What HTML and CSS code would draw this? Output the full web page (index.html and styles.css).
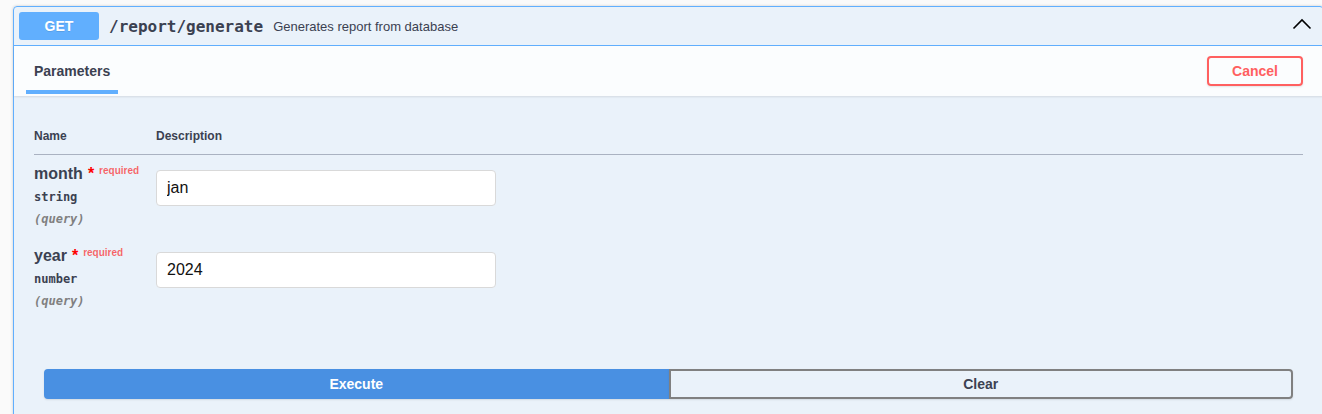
FILE: index.html
```html
<!DOCTYPE html>
<html lang="en">
<head>
<meta charset="utf-8">
<title>GET /report/generate</title>
<link rel="stylesheet" href="styles.css">
</head>
<body>
<div class="page">
  <div class="opblock">
    <div class="summary">
      <span class="method">GET</span>
      <span class="path">/report/generate</span>
      <span class="summary-desc">Generates report from database</span>
      <svg class="arrow" width="20" height="12" viewBox="0 0 20 12" aria-hidden="true">
        <polyline points="1.5,10.5 10,2 18.5,10.5" fill="none" stroke="#000" stroke-width="1.6"/>
      </svg>
    </div>
    <div class="opblock-body">
      <div class="section-header">
        <div class="tab"><h4 class="tab-title"><span class="tab-label">Parameters</span></h4></div>
        <button class="btn cancel">Cancel</button>
      </div>
      <div class="table-container">
        <div class="params">
          <div class="row head">
            <div class="col-name">Name</div>
            <div class="col-desc">Description</div>
          </div>
          <div class="row param">
            <div class="col-name">
              <div class="param-name">month<span class="star">*</span><span class="req">required</span></div>
              <div class="param-type">string</div>
              <div class="param-in">(query)</div>
            </div>
            <div class="col-desc">
              <input class="param-input" type="text" value="jan">
            </div>
          </div>
          <div class="row param">
            <div class="col-name">
              <div class="param-name">year<span class="star">*</span><span class="req">required</span></div>
              <div class="param-type">number</div>
              <div class="param-in">(query)</div>
            </div>
            <div class="col-desc">
              <input class="param-input" type="text" value="2024">
            </div>
          </div>
        </div>
      </div>
      <div class="btn-group">
        <button class="btn execute">Execute</button>
        <button class="btn clear">Clear</button>
      </div>
    </div>
  </div>
</div>
</body>
</html>
```
FILE: styles.css
```css
html, body {
  margin: 0;
  padding: 0;
  overflow: hidden;
  background: #fafafa;
}

body {
  font-family: "Liberation Sans", Arial, sans-serif;
  color: #3b4151;
}

.page {
  padding: 6px 0 0 13px;
}

.opblock {
  width: 1311px;
  box-sizing: border-box;
  border: 1px solid #61affe;
  border-radius: 4px;
  background: rgba(97, 175, 254, 0.1);
  box-shadow: 0 0 3px rgba(0, 0, 0, 0.19);
}

.summary {
  display: flex;
  align-items: center;
  padding: 5px;
  border-bottom: 1px solid #61affe;
}

.method {
  min-width: 80px;
  padding: 6px 0;
  line-height: 16px;
  font-size: 14px;
  font-weight: 700;
  text-align: center;
  color: #fff;
  background: #61affe;
  border-radius: 3px;
  text-shadow: 0 1px 0 rgba(0, 0, 0, 0.1);
}

.path {
  padding: 0 10px;
  font-family: "DejaVu Sans Mono", "Liberation Mono", monospace;
  font-size: 16px;
  font-weight: 700;
  color: #3b4151;
}

.summary-desc {
  flex: 1 1 auto;
  font-size: 13px;
  color: #3b4151;
}

.arrow {
  display: block;
  margin: 0 6px 5px 0;
}

.section-header {
  display: flex;
  align-items: center;
  min-height: 50px;
  box-sizing: border-box;
  padding: 8px 20px;
  background: rgba(255, 255, 255, 0.8);
  box-shadow: 0 1px 2px rgba(0, 0, 0, 0.1);
}

.tab {
  flex: 1;
}

.tab-title {
  margin: 0;
  font-size: 14px;
  line-height: 16px;
  font-weight: 700;
  color: #3b4151;
}

.tab-label {
  position: relative;
}

.tab-label::after {
  content: "";
  position: absolute;
  left: -10%;
  width: 120%;
  bottom: -15px;
  height: 4px;
  background: #61affe;
}

.btn {
  font-family: "Liberation Sans", Arial, sans-serif;
  font-size: 14px;
  line-height: 16px;
  font-weight: 700;
  padding: 5px 23px;
  border: 2px solid #808080;
  border-radius: 4px;
  background: transparent;
  color: #3b4151;
  box-shadow: 0 1px 2px rgba(0, 0, 0, 0.1);
  cursor: pointer;
}

.btn.cancel {
  border-color: #ff6060;
  color: #ff6060;
}

.table-container {
  padding: 20px;
}

.row {
  display: flex;
}

.col-name {
  width: 122px;
  flex: 0 0 122px;
}

.col-desc {
  flex: 1;
}

.row.head {
  padding: 13px 0 11px;
  font-size: 12px;
  line-height: 14px;
  font-weight: 700;
  border-bottom: 1px solid #aab2c1;
}

.row.param {
  padding: 10px 0 11px;
}

.param-name {
  font-size: 16px;
  line-height: 17px;
  font-weight: 700;
  color: #3b4151;
  white-space: nowrap;
}

.star {
  margin-left: 5px;
  color: #ff0000;
}

.req {
  margin-left: 5px;
  font-size: 10px;
  line-height: 10px;
  color: rgba(255, 0, 0, 0.6);
  vertical-align: 5px;
}

.param-type {
  padding: 8px 0 8px;
  font-family: "DejaVu Sans Mono", "Liberation Mono", monospace;
  font-size: 12px;
  line-height: 14px;
  font-weight: 700;
  color: #3b4151;
}

.param-in {
  font-family: "DejaVu Sans Mono", "Liberation Mono", monospace;
  font-size: 12px;
  line-height: 14px;
  font-style: italic;
  font-weight: 600;
  color: #808080;
}

.param-input {
  display: block;
  box-sizing: border-box;
  width: 340px;
  height: 36px;
  margin: 5px 0;
  padding: 8px 10px;
  border: 1px solid #d9d9d9;
  border-radius: 4px;
  background: #fff;
  font-family: "Liberation Sans", Arial, sans-serif;
  font-size: 16px;
  color: #111;
  outline: none;
}

.btn-group {
  display: flex;
  padding: 30px;
}

.btn-group .btn {
  flex: 1 1 50%;
  padding: 5px 0;
}

.btn.execute {
  background: #4990e2;
  border-color: #4990e2;
  color: #fff;
  border-radius: 4px 0 0 4px;
}

.btn.clear {
  border-radius: 0 4px 4px 0;
}
```
